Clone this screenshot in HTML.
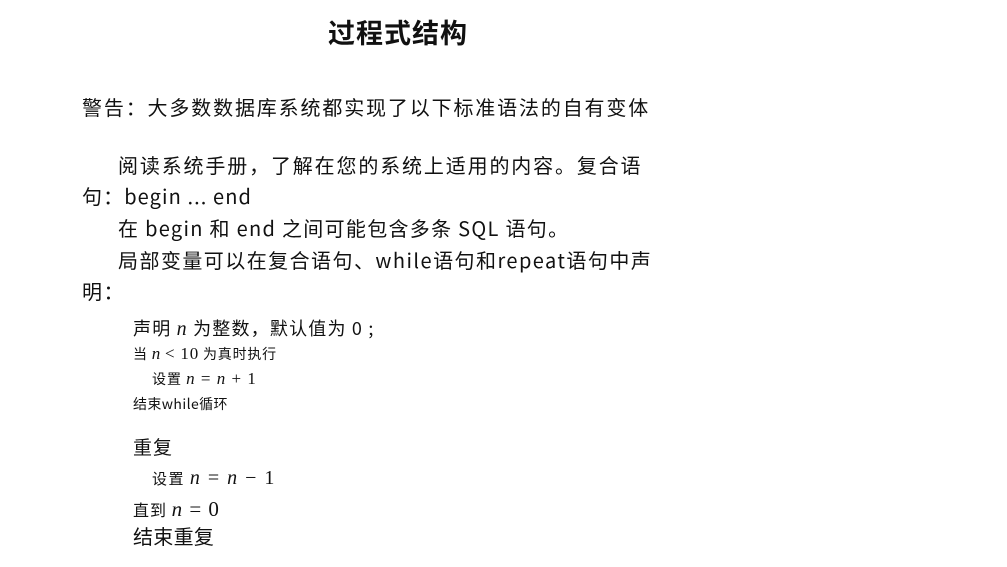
<!DOCTYPE html>
<html><head><meta charset="utf-8"><style>
body{margin:0;width:1007px;height:567px;background:#fff;position:relative;overflow:hidden;font-family:"Noto Sans CJK SC",sans-serif;color:#111}
div{position:absolute;white-space:nowrap}
.m{font-family:"Liberation Serif",serif;font-style:italic}
.r{font-family:"Liberation Serif",serif}
</style></head><body>
<div style="left:328px;top:14px;font-size:27px;line-height:36px;font-weight:bold;letter-spacing:1px">过程式结构</div>
<div style="left:82px;top:93px;font-size:20px;line-height:28px;letter-spacing:1.85px">警告：大多数数据库系统都实现了以下标准语法的自有变体</div>
<div style="left:118px;top:151px;font-size:20px;line-height:28px;letter-spacing:1.85px">阅读系统手册，了解在您的系统上适用的内容。复合语</div>
<div style="left:82px;top:182px;font-size:20px;line-height:28px;letter-spacing:1.1px">句：begin ... end</div>
<div style="left:118px;top:214px;font-size:20px;line-height:28px;letter-spacing:1.3px">在 begin 和 end 之间可能包含多条 SQL 语句。</div>
<div style="left:118px;top:246px;font-size:20px;line-height:28px;letter-spacing:1.45px">局部变量可以在复合语句、while语句和repeat语句中声</div>
<div style="left:82px;top:277px;font-size:20px;line-height:28px;letter-spacing:1.5px">明：</div>
<div style="left:133px;top:316px;font-size:18px;line-height:24px;letter-spacing:1.2px">声明 <span class="m" style="font-size:20px">n</span> 为整数，默认值为 0 ;</div>
<div style="left:133px;top:344px;font-size:14px;line-height:20px;letter-spacing:0.8px">当 <span class="m" style="font-size:17px">n</span> <span class="r" style="font-size:17px">&lt; 10</span> 为真时执行</div>
<div style="left:152px;top:369px;font-size:14px;line-height:20px;letter-spacing:1px">设置 <span class="m" style="font-size:17px">n</span><span class="r" style="font-size:17px"> = </span><span class="m" style="font-size:17px">n</span><span class="r" style="font-size:17px"> + 1</span></div>
<div style="left:133px;top:394px;font-size:14px;line-height:20px;letter-spacing:0.4px">结束while循环</div>
<div style="left:133px;top:435px;font-size:19px;line-height:24px;letter-spacing:1px">重复</div>
<div style="left:152px;top:467px;font-size:15px;line-height:22px;letter-spacing:1.5px">设置 <span class="m" style="font-size:20px">n</span><span class="r" style="font-size:20px"> = </span><span class="m" style="font-size:20px">n</span><span class="r" style="font-size:20px"> − 1</span></div>
<div style="left:133px;top:497px;font-size:16px;line-height:24px;letter-spacing:1px">直到 <span class="m" style="font-size:21px">n</span><span class="r" style="font-size:21px"> = 0</span></div>
<div style="left:133px;top:523px;font-size:20px;line-height:26px;letter-spacing:0.3px">结束重复</div>
</body></html>
